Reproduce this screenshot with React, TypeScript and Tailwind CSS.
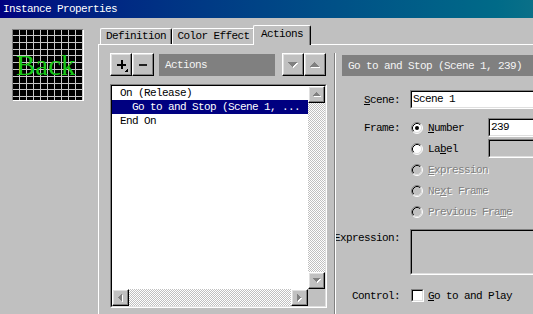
import React from 'react';

const raised =
  'border border-t-white border-l-white border-r-black border-b-black shadow-[inset_-1px_-1px_0_#808080,inset_1px_1px_0_#dfdfdf] bg-[#c0c0c0]';
const sunkenOuter = 'border border-t-[#808080] border-l-[#808080] border-r-white border-b-white';
const sunkenInner = 'border border-t-black border-l-black border-r-[#dfdfdf] border-b-[#dfdfdf]';
const checker = 'bg-[repeating-conic-gradient(#c0c0c0_0%_25%,#ffffff_0%_50%)] bg-size-[2px_2px]';
const grayText = 'text-[#808080] [text-shadow:1px_1px_0_#ffffff]';

function Tri({ dir, w, h }: { dir: 'up' | 'down' | 'left' | 'right'; w: number; h: number }) {
  const horiz = dir === 'left' || dir === 'right';
  const W = horiz ? h : w;
  const H = horiz ? w : h;
  const pts = {
    up: `${w / 2},0 ${w},${h} 0,${h}`,
    down: `0,0 ${w},0 ${w / 2},${h}`,
    left: `${h},0 ${h},${w} 0,${w / 2}`,
    right: `0,0 ${h},${w / 2} 0,${w}`,
  }[dir];
  return (
    <svg width={W + 1} height={H + 1} viewBox={`0 0 ${W + 1} ${H + 1}`} shapeRendering="crispEdges">
      <polygon points={pts} fill="#ffffff" transform="translate(1 1)" />
      <polygon points={pts} fill="#808080" />
    </svg>
  );
}

function Radio({ checked, disabled }: { checked?: boolean; disabled?: boolean }) {
  return (
    <svg width="12" height="12" viewBox="0 0 12 12" className="shrink-0">
      <circle cx="6" cy="6" r="5" fill={disabled ? '#c0c0c0' : '#ffffff'} />
      <path d="M2.11 9.89A5.5 5.5 0 0 1 9.89 2.11" stroke="#808080" fill="none" />
      <path d="M9.89 2.11A5.5 5.5 0 0 1 2.11 9.89" stroke="#ffffff" fill="none" />
      <path d="M2.82 9.18A4.5 4.5 0 0 1 9.18 2.82" stroke="#000000" fill="none" />
      <path d="M9.18 2.82A4.5 4.5 0 0 1 2.82 9.18" stroke="#dfdfdf" fill="none" />
      {checked && <circle cx="6" cy="6" r="2" fill="#000000" />}
    </svg>
  );
}

function Field({ white, className, children }: { white?: boolean; className?: string; children?: React.ReactNode }) {
  return (
    <div className={`${sunkenOuter} ${className ?? ''}`}>
      <div className={`${sunkenInner} h-full ${white ? 'bg-white' : 'bg-[#c0c0c0]'} pl-[1px] leading-[15px] whitespace-nowrap`}>
        {children}
      </div>
    </div>
  );
}

function ScrollBtn({ dir }: { dir: 'up' | 'down' | 'left' | 'right' }) {
  return (
    <div className={`${raised} w-[17px] h-[17px] shrink-0 flex items-center justify-center`}>
      <Tri dir={dir} w={7} h={4} />
    </div>
  );
}

function PreviewBox() {
  const xs = [6, 13, 20, 27, 34, 41, 48, 55, 62, 69];
  const ys = [5, 12, 19, 25, 32, 39, 46, 53, 59, 66];
  return (
    <div className={`ml-[12px] mt-[11px] w-[72px] h-[72px] ${sunkenOuter} relative bg-black`}>
      <svg width="70" height="70" className="block" shapeRendering="crispEdges">
        {xs.map((x) => (
          <line key={'v' + x} x1={x + 0.5} y1="0" x2={x + 0.5} y2="70" stroke="#c8c8c8" />
        ))}
        {ys.map((y) => (
          <line key={'h' + y} x1="0" y1={y + 0.5} x2="70" y2={y + 0.5} stroke="#c8c8c8" />
        ))}
      </svg>
      <span className="absolute left-[3px] top-[21px] text-[29px] leading-none tracking-normal text-[#18c818] font-['Liberation_Serif',serif]">
        Back
      </span>
    </div>
  );
}

export default function App() {
  return (
    <div className="w-[533px] h-[314px] overflow-hidden bg-[#c0c0c0] font-['Liberation_Mono',monospace] text-[11px] tracking-[-0.6px] leading-[14px] text-black">
      {/* title bar */}
      <div className="h-[18px] bg-linear-to-r from-[#000080] to-[#0a7088] text-white pl-[3px] leading-[18px]">
        Instance Properties
      </div>

      <div className="flex h-[296px]">
        <div className="w-[98px] shrink-0">
          <PreviewBox />
        </div>

        <div className="w-[460px] shrink-0 flex flex-col pt-[7px]">
          {/* tabs */}
          <div className="relative z-10 -mb-px h-[20px] flex items-end pl-[2px]">
            <div className="w-[72px] h-[16px] mb-px border-l border-t border-white border-r border-r-black shadow-[inset_-1px_0_0_#808080] rounded-t-[2px] text-center leading-[15px]">
              Definition
            </div>
            <div className="w-[83px] h-[16px] mb-px border-l border-t border-white border-r border-r-black shadow-[inset_-1px_0_0_#808080] rounded-t-[2px] text-center leading-[15px]">
              Color Effect
            </div>
            <div className="-ml-[2px] w-[58px] h-[20px] bg-[#c0c0c0] border-l border-t border-white border-r border-r-black shadow-[inset_-1px_0_0_#808080] rounded-t-[2px] text-center leading-[17px]">
              Actions
            </div>
          </div>

          {/* panel */}
          <div className="flex-1 border-t border-l border-white flex pl-[11px] pt-[8px]">
            {/* left: actions list */}
            <div className="w-[217px] shrink-0 flex flex-col">
              <div className="h-[23px] flex items-center">
                <div className={`${raised} w-[22px] h-[23px] relative flex items-center justify-center`}>
                  <svg width="9" height="9" shapeRendering="crispEdges">
                    <rect x="3.5" y="0" width="2" height="9" fill="#000" />
                    <rect x="0" y="3.5" width="9" height="2" fill="#000" />
                  </svg>
                  <svg width="4" height="4" className="absolute right-[3px] bottom-[3px]" shapeRendering="crispEdges">
                    <polygon points="4,0 4,4 0,4" fill="#000" />
                  </svg>
                </div>
                <div className={`${raised} w-[22px] h-[23px] flex items-center justify-center`}>
                  <div className="w-[8px] h-[2px] bg-[#202020]" />
                </div>
                <div className="ml-[5px] w-[116px] h-[22px] bg-[#808080] text-[#f4f4f4] pl-[6px] flex items-center">
                  Actions
                </div>
                <div className={`${raised} ml-[7px] w-[22px] h-[23px] flex items-center justify-center`}>
                  <Tri dir="down" w={9} h={5} />
                </div>
                <div className={`${raised} w-[22px] h-[23px] flex items-center justify-center`}>
                  <Tri dir="up" w={9} h={5} />
                </div>
              </div>

              <div className={`mt-[8px] h-[224px] ${sunkenOuter}`}>
                <div className={`h-full ${sunkenInner} flex flex-col bg-[#c0c0c0]`}>
                  <div className="flex-1 flex min-h-0">
                    <div className="flex-1 bg-white whitespace-nowrap">
                      <div className="h-[14px] pl-[8px]">On (Release)</div>
                      <div className="h-[14px] pl-[20px] bg-[#000080] text-white">Go to and Stop (Scene 1, ...</div>
                      <div className="h-[14px] pl-[8px]">End On</div>
                    </div>
                    <div className="w-[17px] flex flex-col">
                      <ScrollBtn dir="up" />
                      <div className={`flex-1 ${checker}`} />
                      <ScrollBtn dir="down" />
                    </div>
                  </div>
                  <div className="h-[17px] flex">
                    <ScrollBtn dir="left" />
                    <div className={`flex-1 ${checker}`} />
                    <ScrollBtn dir="right" />
                    <div className="w-[17px] bg-[#c0c0c0]" />
                  </div>
                </div>
              </div>
            </div>

            {/* splitter */}
            <div className="ml-[7px] w-[2px] shrink-0 border-l border-l-[#808080] border-r border-r-white" />

            {/* right: parameters */}
            <div className="flex-1 overflow-hidden pl-[6px] flex flex-col">
              <div className="mt-[2px] h-[21px] bg-[#808080] text-[#f4f4f4] pl-[6px] flex items-center whitespace-nowrap">
                Go to and Stop (Scene 1, 239)
              </div>

              <div className="mt-[14px] flex items-center h-[19px]">
                <div className="w-[58px] shrink-0 flex justify-end whitespace-nowrap">
                  <span><u>S</u>cene:</span>
                </div>
                <Field white className="ml-[10px] flex-1 h-[19px]">Scene 1</Field>
              </div>

              <div className="mt-[8px] flex">
                <div className="w-[58px] shrink-0 h-[21px] flex items-center justify-end">Frame:</div>
                <div className="ml-[10px] flex-1 flex flex-col">
                  <div className="h-[21px] flex items-center">
                    <div className="w-[78px] shrink-0 flex items-center pl-[1px] gap-[5px]">
                      <Radio checked />
                      <span><u>N</u>umber</span>
                    </div>
                    <Field white className="flex-1 h-[19px]">239</Field>
                  </div>
                  <div className="h-[21px] flex items-center">
                    <div className="w-[78px] shrink-0 flex items-center pl-[1px] gap-[5px]">
                      <Radio />
                      <span>La<u>b</u>el</span>
                    </div>
                    <Field className="flex-1 h-[19px]" />
                  </div>
                  <div className="h-[21px] flex items-center pl-[1px] gap-[5px]">
                    <Radio disabled />
                    <span className={grayText}><u>E</u>xpression</span>
                  </div>
                  <div className="h-[21px] flex items-center pl-[1px] gap-[5px]">
                    <Radio disabled />
                    <span className={grayText}>Ne<u>x</u>t Frame</span>
                  </div>
                  <div className="h-[21px] flex items-center pl-[1px] gap-[5px] whitespace-nowrap">
                    <Radio disabled />
                    <span className={grayText}>Previous Fra<u>m</u>e</span>
                  </div>
                </div>
              </div>

              <div className="mt-[7px] flex">
                <div className="w-[58px] shrink-0 flex justify-end whitespace-nowrap pt-[2px]">
                  <span>Expression:</span>
                </div>
                <Field className="ml-[10px] flex-1 h-[46px]" />
              </div>

              <div className="mt-[14px] flex items-center h-[13px]">
                <div className="w-[58px] shrink-0 flex justify-end whitespace-nowrap">Control:</div>
                <div className={`ml-[11px] w-[13px] h-[13px] ${sunkenOuter}`}>
                  <div className={`h-full ${sunkenInner} bg-white`} />
                </div>
                <span className="ml-[4px] whitespace-nowrap"><u>G</u>o to and Play</span>
              </div>
            </div>
          </div>
        </div>
      </div>
    </div>
  );
}
